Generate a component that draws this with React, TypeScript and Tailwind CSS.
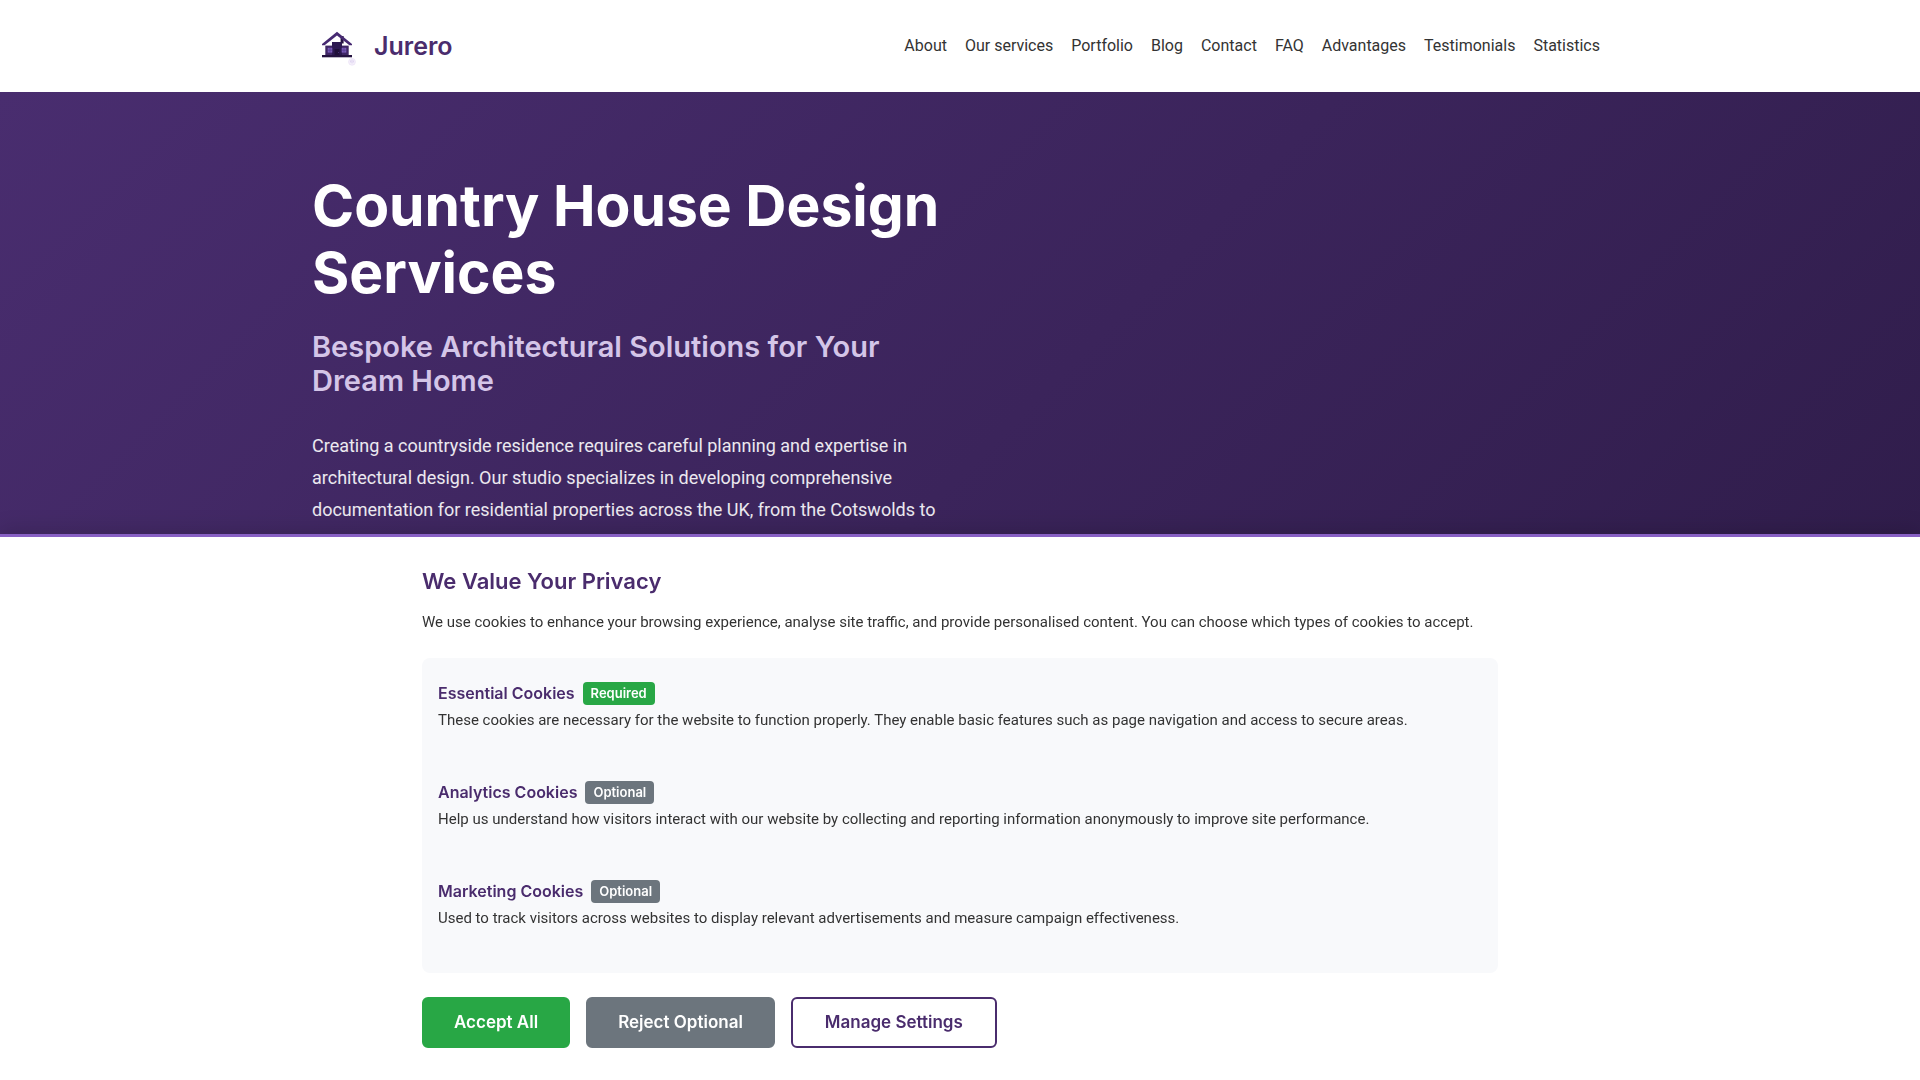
import React from 'react';

interface CookieType {
  title: string;
  required: boolean;
  description: string;
}

const navLinks = [
  { label: 'About', href: '#about' },
  { label: 'Our services', href: '#services' },
  { label: 'Portfolio', href: '#portfolio' },
  { label: 'Blog', href: '#blog' },
  { label: 'Contact', href: '#contact' },
  { label: 'FAQ', href: '#faq' },
  { label: 'Advantages', href: '#advantages' },
  { label: 'Testimonials', href: '#testimonials' },
  { label: 'Statistics', href: '#statistics' }
];

const cookieTypes: CookieType[] = [
  {
    title: 'Essential Cookies',
    required: true,
    description:
      'These cookies are necessary for the website to function properly. They enable basic features such as page navigation and access to secure areas.'
  },
  {
    title: 'Analytics Cookies',
    required: false,
    description:
      'Help us understand how visitors interact with our website by collecting and reporting information anonymously to improve site performance.'
  },
  {
    title: 'Marketing Cookies',
    required: false,
    description:
      'Used to track visitors across websites to display relevant advertisements and measure campaign effectiveness.'
  }
];

function HouseLogo() {
  return (
    <svg viewBox="0 0 50 50" className="w-[50px] h-[50px] shrink-0" aria-hidden="true">
      {/* chimney */}
      <rect x="28.6" y="15" width="3" height="7.5" fill="#24123f" />
      {/* roof */}
      <path d="M25 10.8 L40 23 L40 24.2 L37.4 24.2 L25 14.6 L12.6 24.2 L10 24.2 L10 23 Z" fill="#472a72" />
      {/* walls */}
      <rect x="13.3" y="24.6" width="23.4" height="9.6" fill="#3f2665" />
      <rect x="20" y="21" width="10" height="13.2" fill="#2c1850" />
      {/* windows */}
      <rect x="15.7" y="26.8" width="4.6" height="4.8" fill="#7a5bb8" />
      <rect x="29.7" y="26.8" width="4.6" height="4.8" fill="#7a5bb8" />
      <path d="M18 26.8v4.8M15.7 29.2h4.6M32 26.8v4.8M29.7 29.2h4.6" stroke="#4f3585" strokeWidth="0.6" />
      {/* door */}
      <rect x="22.6" y="28" width="4.8" height="6.2" fill="#1f0f38" />
      <rect x="26" y="31" width="0.8" height="0.8" fill="#5a3f90" />
      {/* ground */}
      <rect x="10" y="34" width="30" height="2.3" fill="#24123f" />
      {/* small seal */}
      <circle cx="40" cy="40.8" r="3.4" fill="#f5f0fb" stroke="#ebe2f6" strokeWidth="0.8" />
      <path d="M40 38.4v4M38.6 39.4v2M41.4 39.4v2" stroke="#d6c7ec" strokeWidth="0.7" />
    </svg>
  );
}

function Header() {
  return (
    <header className="bg-white">
      <div className="max-w-[1320px] mx-auto pl-3 pr-5 min-h-[92px] flex items-center justify-between">
        <a href="#" className="flex items-center gap-3 font-['Inter',sans-serif] text-[25px] leading-8 font-semibold text-[#4a2c6d]">
          <HouseLogo />
          Jurero
        </a>
        <nav className="flex gap-[18px] text-base text-[#333333]">
          {navLinks.map((link) => (
            <a key={link.label} href={link.href}>
              {link.label}
            </a>
          ))}
        </nav>
      </div>
    </header>
  );
}

function Hero() {
  return (
    <section className="min-h-[760px] bg-[linear-gradient(135deg,#492d6f_0%,#2d1b47_100%)] py-20">
      <div className="max-w-[1320px] mx-auto px-3">
        <div className="max-w-[640px]">
          <h1 className="font-['Inter',sans-serif] text-[57px] leading-[67px] font-bold text-white">
            Country House Design Services
          </h1>
          <h2 className="mt-6 font-['Inter',sans-serif] text-[29px] leading-[34px] font-semibold text-[#d4c5e8]">
            Bespoke Architectural Solutions for Your Dream Home
          </h2>
          <p className="mt-8 text-lg leading-8 text-white/90">
            Creating a countryside residence requires careful planning and expertise in architectural design. Our studio
            specializes in developing comprehensive documentation for residential properties across the UK, from the
            Cotswolds to
          </p>
        </div>
      </div>
    </section>
  );
}

function CookieRow({ title, required, description }: CookieType) {
  return (
    <div>
      <div className="flex items-center gap-2">
        <h4 className="font-['Inter',sans-serif] text-base leading-[23px] font-semibold text-[#4a2c6d]">{title}</h4>
        <span
          className={`rounded px-2 font-['Inter',sans-serif] text-[13px] leading-[23px] font-semibold text-white ${
            required ? 'bg-[#28a745]' : 'bg-[#6c757d]'
          }`}
        >
          {required ? 'Required' : 'Optional'}
        </span>
      </div>
      <p className="mt-[3px] text-[15px] leading-6">{description}</p>
    </div>
  );
}

function CookieBanner() {
  return (
    <div
      role="dialog"
      aria-labelledby="cookie-title"
      className="fixed inset-x-0 bottom-0 z-50 bg-white border-t-3 border-[#8860c4] py-8 text-[#333333] shadow-[0_-4px_20px_rgba(0,0,0,0.15)]"
    >
      <div className="max-w-[1100px] mx-auto px-3">
        <h3 id="cookie-title" className="font-['Inter',sans-serif] text-[22px] leading-6 font-semibold text-[#4a2c6d]">
          We Value Your Privacy
        </h3>
        <p className="mt-[17px] text-[15px] leading-6">
          We use cookies to enhance your browsing experience, analyse site traffic, and provide personalised content. You
          can choose which types of cookies to accept.
        </p>

        <div className="mt-6 flex flex-col gap-[49px] rounded-lg bg-[#f8f9fb] px-4 pt-6 pb-[43px]">
          {cookieTypes.map((cookie) => (
            <CookieRow key={cookie.title} {...cookie} />
          ))}
        </div>

        <div className="mt-6 flex flex-wrap gap-4 font-['Inter',sans-serif] text-[17px] leading-[23px] font-semibold">
          <button className="rounded-md border-2 border-[#28a745] bg-[#28a745] px-[30px] py-3 text-white cursor-pointer">
            Accept All
          </button>
          <button className="rounded-md border-2 border-[#6c757d] bg-[#6c757d] px-[30px] py-3 text-white cursor-pointer">
            Reject Optional
          </button>
          <button className="rounded-md border-2 border-[#4a2c6d] bg-white px-8 py-3 text-[#4a2c6d] cursor-pointer">
            Manage Settings
          </button>
        </div>
      </div>
    </div>
  );
}

export default function App() {
  return (
    <div className="min-h-screen bg-white font-['Roboto',sans-serif]">
      <Header />
      <Hero />
      <CookieBanner />
    </div>
  );
}
